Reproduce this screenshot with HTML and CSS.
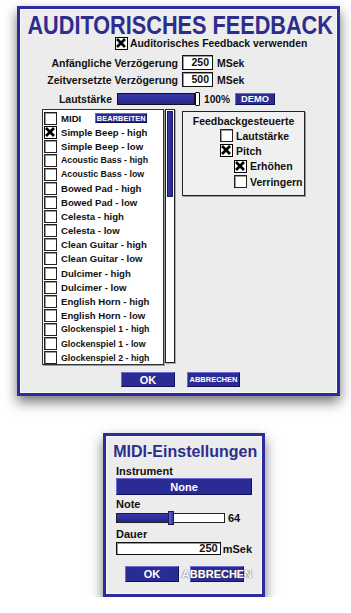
FILE: index.html
```html
<!DOCTYPE html>
<html>
<head>
<meta charset="utf-8">
<link rel="stylesheet" href="styles.css">
</head>
<body>
<div class="dlg main">
  <div class="title"><span>AUDITORISCHES FEEDBACK</span></div>
  <div class="use-row"><span class="cb on"><svg viewBox="0 0 10 10"><path d="M1 1L9 9M9 1L1 9"/></svg></span><span>Auditorisches Feedback verwenden</span></div>
  <div class="delay-row"><span class="dl">Anfängliche Verzögerung</span><span class="num">250</span><span class="unit">MSek</span></div>
  <div class="delay-row second"><span class="dl">Zeitversetzte Verzögerung</span><span class="num">500</span><span class="unit">MSek</span></div>
  <div class="vol-row"><span class="vl">Lautstärke</span><span class="vslider"><span class="vbar"></span><span class="vhandle"></span></span><span class="pct">100%</span><span class="btn demo">DEMO</span></div>
  <div class="area">
    <div class="list">
      <div class="row"><span class="cb"></span><span>MIDI</span><span class="btn edit">BEARBEITEN</span></div>
      <div class="row"><span class="cb on"><svg viewBox="0 0 10 10"><path d="M1 1L9 9M9 1L1 9"/></svg></span><span>Simple Beep - high</span></div>
      <div class="row"><span class="cb"></span><span>Simple Beep - low</span></div>
      <div class="row sm"><span class="cb"></span><span>Acoustic Bass - high</span></div>
      <div class="row sm"><span class="cb"></span><span>Acoustic Bass - low</span></div>
      <div class="row"><span class="cb"></span><span>Bowed Pad - high</span></div>
      <div class="row"><span class="cb"></span><span>Bowed Pad - low</span></div>
      <div class="row"><span class="cb"></span><span>Celesta - high</span></div>
      <div class="row"><span class="cb"></span><span>Celesta - low</span></div>
      <div class="row"><span class="cb"></span><span>Clean Guitar - high</span></div>
      <div class="row"><span class="cb"></span><span>Clean Guitar - low</span></div>
      <div class="row"><span class="cb"></span><span>Dulcimer - high</span></div>
      <div class="row"><span class="cb"></span><span>Dulcimer - low</span></div>
      <div class="row"><span class="cb"></span><span>English Horn - high</span></div>
      <div class="row"><span class="cb"></span><span>English Horn - low</span></div>
      <div class="row sm"><span class="cb"></span><span>Glockenspiel 1 - high</span></div>
      <div class="row sm"><span class="cb"></span><span>Glockenspiel 1 - low</span></div>
      <div class="row sm"><span class="cb"></span><span>Glockenspiel 2 - high</span></div>
    </div>
    <div class="scroll"><div class="thumb"></div></div>
    <div class="fb">
      <div class="fbt">Feedbackgesteuerte</div>
      <div class="fbr"><span class="cb"></span><span>Lautstärke</span></div>
      <div class="fbr"><span class="cb on"><svg viewBox="0 0 10 10"><path d="M1 1L9 9M9 1L1 9"/></svg></span><span>Pitch</span></div>
      <div class="fbr sub"><span class="cb on"><svg viewBox="0 0 10 10"><path d="M1 1L9 9M9 1L1 9"/></svg></span><span>Erhöhen</span></div>
      <div class="fbr sub"><span class="cb"></span><span>Verringern</span></div>
    </div>
  </div>
  <div class="btn-row">
    <span class="btn ok">OK</span>
    <span class="btn cancel">ABBRECHEN</span>
  </div>
</div>

<div class="dlg midi">
  <div class="mtitle"><span>MIDI-Einstellungen</span></div>
  <div class="mlbl first">Instrument</div>
  <div class="btn none">None</div>
  <div class="mlbl">Note</div>
  <div class="note-row"><span class="nbar"><span class="nfill"></span><span class="nhandle"></span></span><span class="nval">64</span></div>
  <div class="mlbl">Dauer</div>
  <div class="dur-row"><span class="dinput">250</span><span class="dunit">mSek</span></div>
  <div class="mbtn-row">
    <span class="btn mok">OK</span>
    <span class="btn mcancel"><span>ABBRECHEN</span></span>
  </div>
</div>
</body>
</html>
```

FILE: styles.css
```css
* { box-sizing: border-box; margin: 0; padding: 0; }
html, body { background: #ffffff; }
body {
  font-family: "Liberation Sans", Arial, sans-serif;
  font-weight: bold;
  color: #111;
  display: flex;
  flex-direction: column;
  align-items: flex-start;
}
.dlg {
  background: #ececec;
  border: 3px solid #2c2c9e;
  box-shadow: inset 0 0 0 1px #f6f6fb, 0 6px 12px rgba(0, 0, 0, 0.55);
}
.main {
  margin: 6px 0 0 17px;
  width: 323px;
  height: 390px;
  padding-top: 4px;
}
.title {
  height: 24px;
  line-height: 24px;
  font-size: 25px;
  color: #2d2d8c;
  display: flex;
  justify-content: center;
  white-space: nowrap;
  padding-left: 3px;
}
.title span { display: block; flex: none; transform: scaleX(0.867); }

.cb {
  width: 13px;
  height: 13px;
  flex: none;
  background: #fff;
  border: 1px solid #222;
  box-shadow: inset 1px 1px 0 #9a9a9a;
  display: block;
}
.cb svg { display: block; width: 10px; height: 10px; }
.cb svg path { stroke: #000; stroke-width: 2.7; fill: none; }
.cb.on { border: 1.5px solid #000; box-shadow: none; }

.use-row {
  display: flex;
  align-items: center;
  height: 12px;
  padding-left: 95px;
  gap: 2px;
  font-size: 10.4px;
}
.delay-row {
  display: flex;
  align-items: center;
  height: 15px;
  margin-top: 6px;
  font-size: 10.5px;
}
.delay-row.second { margin-top: 2px; }
.dl { width: 158px; text-align: right; }
.num {
  margin-left: 4px;
  width: 31px;
  height: 15px;
  background: #fff;
  border: 1px solid #111;
  box-shadow: inset 1px 1px 0 #999;
  text-align: right;
  padding-right: 3px;
  line-height: 13px;
}
.unit { margin-left: 4px; }

.vol-row {
  display: flex;
  align-items: center;
  height: 14px;
  margin-top: 5px;
  font-size: 10.5px;
}
.vl { width: 92px; text-align: right; }
.vslider { margin-left: 5px; display: flex; align-items: center; }
.vbar {
  width: 78px;
  height: 12px;
  background: linear-gradient(#3a3aa8, #25258e);
  border: 1px solid #111;
}
.vhandle {
  width: 5px;
  height: 14px;
  background: #fff;
  border: 1px solid #111;
  border-radius: 1px;
}
.pct { margin-left: 4px; font-size: 10.2px; }

.btn {
  display: flex;
  align-items: center;
  justify-content: center;
  background: #2b2b94;
  color: #fff;
  border: 1px solid;
  border-color: #6a6ad0 #12125a #12125a #6a6ad0;
  white-space: nowrap;
  flex: none;
}
.demo { margin-left: 5px; width: 40px; height: 12px; font-size: 9.3px; }

.area {
  display: flex;
  align-items: flex-start;
  margin-top: 3px;
  height: 256px;
  padding-left: 22px;
}
.list {
  width: 122px;
  height: 256px;
  background: #fff;
  border: 1px solid #333;
  box-shadow: 1px 1px 0 #999;
  overflow: hidden;
  padding-top: 1px;
}
.row {
  height: 14.1px;
  display: flex;
  align-items: center;
  padding-left: 1px;
  gap: 4px;
  font-size: 9.6px;
  white-space: nowrap;
}
.row.sm { font-size: 8.8px; }
.edit {
  margin-left: 10px;
  width: 52px;
  height: 10px;
  font-size: 7.4px;
  letter-spacing: 0.1px;
}
.scroll {
  margin-left: 1px;
  width: 10px;
  height: 254px;
  background: #fff;
  border: 1px solid #222;
  box-shadow: 1px 1px 0 #aaa;
  padding: 1px;
}
.thumb {
  height: 86px;
  background: linear-gradient(90deg, #3a3aac, #25258c);
  border: 1px solid #1a1a6a;
}
.fb {
  margin-left: 7px;
  margin-top: 2px;
  width: 123px;
  height: 85px;
  border: 1px solid #222;
  box-shadow: 1px 1px 0 #999;
  background: #f0f0f0;
  padding-top: 3px;
  font-size: 10.5px;
}
.fbt { line-height: 13px; text-align: center; }
.fbr {
  height: 15.3px;
  display: flex;
  align-items: center;
  gap: 3px;
  padding-left: 37px;
}
.fbr.sub { padding-left: 51px; }

.btn-row {
  display: flex;
  margin-top: 7px;
  padding-left: 101px;
  gap: 12px;
}
.ok { width: 54px; height: 15px; font-size: 11px; }
.cancel { width: 53px; height: 15px; font-size: 7.5px; }

.midi {
  margin: 37px 0 0 103px;
  width: 162px;
  height: 164px;
  padding: 6px 10px 0;
}
.mtitle {
  font-size: 16.5px;
  line-height: 18px;
  color: #2d2d8c;
  display: flex;
  justify-content: center;
  white-space: nowrap;
  padding-left: 2px;
}
.mtitle span { display: block; flex: none; transform: scaleX(0.97); }
.mlbl {
  font-size: 11px;
  line-height: 13px;
  margin-top: 3px;
}
.mlbl.first { margin-top: 5px; }
.none { width: 136px; height: 17px; font-size: 11px; }
.note-row { display: flex; align-items: center; height: 14px; }
.nbar {
  width: 109px;
  height: 10px;
  background: #fff;
  border: 1px solid #222;
  display: flex;
  align-items: center;
}
.nfill { width: 51px; height: 8px; background: linear-gradient(#3a3aa8, #25258e); flex: none; }
.nhandle {
  width: 6px;
  height: 14px;
  flex: none;
  background: linear-gradient(90deg, #6a6ad0, #3535a0);
  border: 1px solid #1a1a60;
}
.nval { margin-left: 3px; font-size: 11px; }
.dur-row { display: flex; align-items: center; height: 13px; margin-top: 1px; }
.dinput {
  width: 111px;
  height: 13px;
  background: #fff;
  border: 1px solid #111;
  box-shadow: inset 1px 1px 0 #999;
  text-align: right;
  padding-right: 2px;
  font-size: 11px;
  line-height: 11px;
}
.dunit { margin-left: 2px; font-size: 11px; }
.mbtn-row { display: flex; margin-top: 11px; padding-left: 9px; gap: 11px; }
.mok { width: 54px; height: 16px; font-size: 11px; }
.mcancel { width: 54px; height: 16px; font-size: 11px; }
.mcancel span { text-shadow: 0 0 1px #555, 0 0 1px #555; }
```
